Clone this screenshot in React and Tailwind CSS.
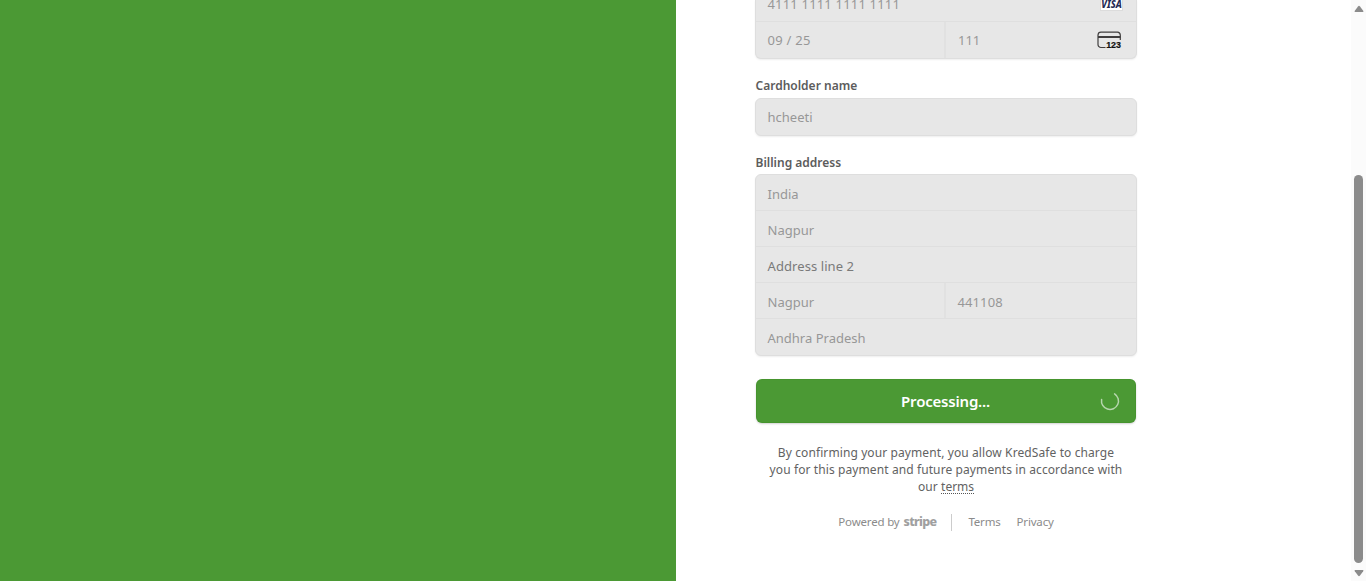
const box = 'flex w-[382px] flex-col overflow-hidden rounded-[6px] border border-[#dedede] bg-[#e7e7e7] shadow-[0_1px_2px_rgba(0,0,0,0.07)]';
const row = 'flex h-9 shrink-0 items-center border-b border-[#dfdfdf]';
const value = 'whitespace-pre text-[13px] leading-5 text-[#979797]';
const label = 'pl-[0.5px] text-[12px] leading-4 font-semibold text-[#5c5c5c]';

function Visa() {
  return (
    <svg className="mr-[13px] h-[15px] w-[23px]" viewBox="0 0 23 15">
      <rect x="0.5" y="0.5" width="22" height="14" fill="#fff" stroke="#dcdcdc" />
      <text x="1.3" y="11.6" fill="#252b55" fontFamily="Noto Sans, sans-serif" fontWeight="800" fontStyle="italic" fontSize="9.8" textLength="20.5" lengthAdjust="spacingAndGlyphs">VISA</text>
    </svg>
  );
}

function CvcIcon() {
  return (
    <svg className="mr-[14px] h-[18px] w-[25px]" viewBox="0 0 25 18" fill="none">
      <path d="M8.5 16.5H4A3 3 0 0 1 1 13.5V4A3 3 0 0 1 4 1.2H20.5A3 3 0 0 1 23.3 4V9" stroke="#403e3e" strokeWidth="1.2" />
      <path d="M1 6H23.5" stroke="#403e3e" strokeWidth="2" />
      <text x="9.2" y="17" fill="#111" stroke="#111" strokeWidth="0.2" fontFamily="Liberation Sans, sans-serif" fontWeight="700" fontSize="8.5" textLength="14.8" lengthAdjust="spacingAndGlyphs">123</text>
    </svg>
  );
}

function Arrow({ down }) {
  return (
    <svg className="h-[8px] w-[10px]" viewBox="0 0 10 8">
      <path d={down ? 'M1.2 1H8.8Q10 1 9.2 2.2L6 6.6Q5 7.8 4 6.6L.8 2.2Q0 1 1.2 1Z' : 'M1.2 7H8.8Q10 7 9.2 5.8L6 1.4Q5 .2 4 1.4L.8 5.8Q0 7 1.2 7Z'} fill="#8b8b8b" />
    </svg>
  );
}

export default function App() {
  return (
    <div className="flex h-[581px] w-full overflow-hidden bg-white font-['Noto_Sans','Open_Sans',sans-serif]">
      <div className="w-[676px] shrink-0 bg-[#4b9934]" />
      <main className="flex flex-1 flex-col pl-[79px]">
        <div className={`${box} h-[59px] shrink-0 rounded-t-none border-t-0`}>
          <div className="flex h-[22px] shrink-0 items-end justify-between border-b border-[#dfdfdf]">
            <span className={`${value} mb-[7px] ml-[11.5px] tracking-[0.18px]`}>4111 1111 1111 1111</span>
            <span className="mb-[10px] flex"><Visa /></span>
          </div>
          <div className="flex h-9 shrink-0">
            <div className="flex w-[190px] items-center border-r-2 border-[#e1e1e1] pl-[11.5px]">
              <span className={`${value} tracking-[0.28px]`}>09 / 25</span>
            </div>
            <div className="flex flex-1 items-center justify-between pl-3">
              <span className={value}>111</span>
              <CvcIcon />
            </div>
          </div>
        </div>

        <div className="mt-[19px] mb-[4px] flex h-4 items-center">
          <span className={label}>Cardholder name</span>
        </div>
        <div className={`${box} h-[38px] shrink-0`}>
          <div className="flex h-9 items-center pl-[11.5px]"><span className={value}>hcheeti</span></div>
        </div>

        <div className="mt-[19px] mb-[3px] flex h-4 items-center">
          <span className={label}>Billing address</span>
        </div>
        <div className={`${box} h-[182px] shrink-0`}>
          <div className={`${row} pt-[2px] pl-[11.5px]`}><span className={value}>India</span></div>
          <div className={`${row} pt-[2px] pl-[11.5px]`}><span className={value}>Nagpur</span></div>
          <div className={`${row} pt-[2px] pl-[11.5px]`}><span className="text-[13px] leading-5 tracking-[0.08px] text-[#7a7a7a]">Address line 2</span></div>
          <div className={row}>
            <div className="flex h-full w-[190px] items-center border-r-2 border-[#e1e1e1] pt-[2px] pl-[11.5px]"><span className={value}>Nagpur</span></div>
            <span className={`${value} pt-[2px] pl-[11.5px] tracking-[0.1px]`}>441108</span>
          </div>
          <div className="flex h-9 items-center pt-px pl-[11.5px]"><span className={value}>Andhra Pradesh</span></div>
        </div>

        <button className="mt-[23px] ml-px flex h-11 w-[380px] shrink-0 items-center justify-center rounded-[6px] bg-[#4b9934] shadow-[0_1px_2px_rgba(0,0,0,0.18),inset_0_0_0_1px_rgba(50,130,25,0.2)]">
          <span className="ml-[35px] flex-1 text-center text-[15px] leading-5 font-semibold tracking-[-0.2px] text-white">Processing...</span>
          <svg className="mr-[16px] h-5 w-5" viewBox="0 0 20 20" fill="none">
            <path d="M1.6 8.5A8.5 8.5 0 1 0 14.6 2.8" stroke="#b7d6ae" strokeWidth="1.5" strokeLinecap="round" />
          </svg>
        </button>

        <div className="mt-[21px] flex w-[382px] flex-col items-center text-[12px] leading-[17px] tracking-[0.1px] whitespace-nowrap text-[#626262]">
          <span>By confirming your payment, you allow KredSafe to charge</span>
          <span>you for this payment and future payments in accordance with</span>
          <span>our <a className="tracking-normal underline decoration-[#555] decoration-dotted decoration-1 underline-offset-2">terms</a></span>
        </div>

        <footer className="mt-[18px] flex h-[18px] w-[382px] items-center justify-center text-[11.5px] tracking-[-0.18px] whitespace-nowrap text-[#8b8b8b]">
          <span>Powered by</span>
          <b className="ml-1 text-[12.5px] font-extrabold tracking-[-0.7px] text-[#a0a0a0]">stripe</b>
          <span className="mr-[16px] ml-[15px] h-[17px] w-px bg-[#cccccc]" />
          <span>Terms</span>
          <span className="ml-4">Privacy</span>
        </footer>
      </main>
      <aside className="flex w-[15px] shrink-0 flex-col items-center bg-[#fbfbfb] pt-[5px] pb-[4px]">
        <Arrow />
        <div className="mt-[162px] mb-[6px] w-[9px] flex-1 rounded-full bg-[#8b8b8b]" />
        <Arrow down />
      </aside>
    </div>
  );
}
